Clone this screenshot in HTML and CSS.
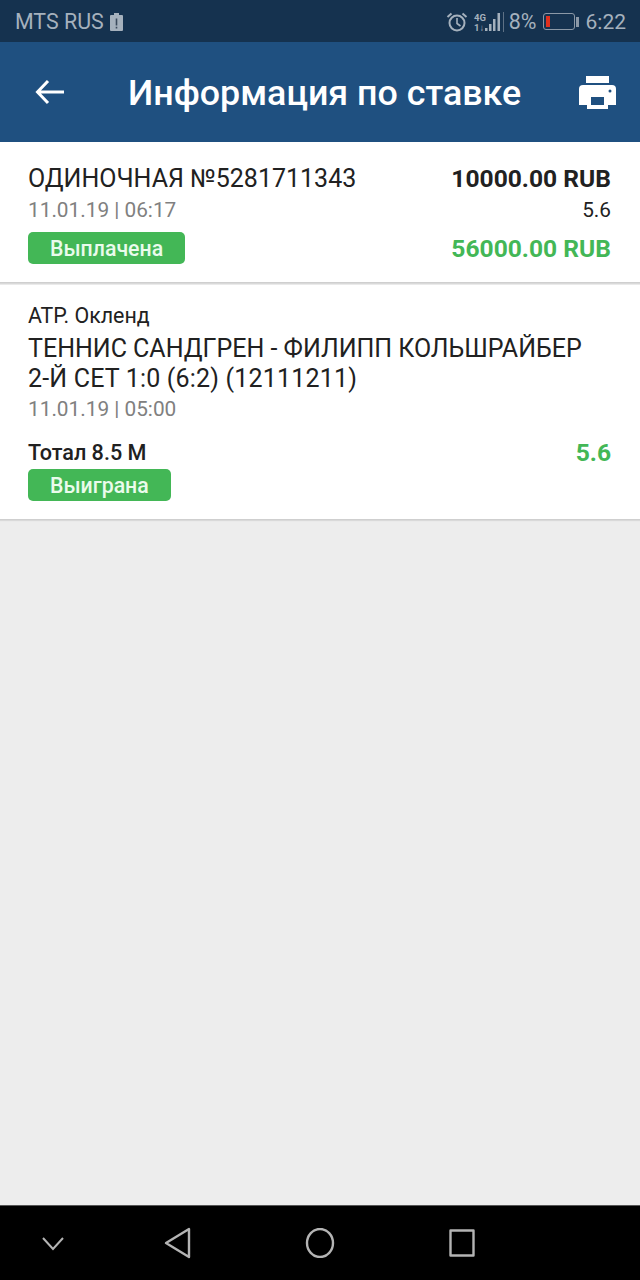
FILE: index.html
```html
<!DOCTYPE html>
<html lang="en">

<head>
    <meta charset="UTF-8">
    <title>Информация по ставке</title>
    <link rel="stylesheet" href="styles.css">
</head>

<body>
    <div class="status">
        <div class="status-left">
            <span>MTS RUS</span>
            <svg width="13" height="20" viewBox="0 0 13 20"><path d="M4 1h5v2h3a1 1 0 0 1 1 1v14a1 1 0 0 1-1 1H1a1 1 0 0 1-1-1V4a1 1 0 0 1 1-1h3z" fill="#a5b1bd"/><path d="M5.700 6.500h1.600v7H5.700zM5.700 14.800h1.600v1.700H5.700z" fill="#3a4a5c"/></svg>
        </div>
        <div class="status-right">
            <svg width="22" height="20" viewBox="0 0 22 20" fill="none" stroke="#a5b1bd"><circle cx="11" cy="11" r="7.500" stroke-width="2"/><path d="M11 6v5.500l3.500 2.500" stroke-width="1.600"/><path d="M1.500 5l4-3.500M20.500 5l-4-3.500" stroke-width="2"/></svg>
            <svg class="signal" width="30" height="22" viewBox="0 0 30 22" fill="#a5b1bd">
                <text class="net" x="1" y="10">4G</text>
                <text class="net" x="1" y="20">1↓</text>
                <rect x="12" y="17" width="2.500" height="3"/>
                <rect x="16" y="13" width="2.500" height="7"/>
                <rect x="20" y="8" width="2.500" height="12"/>
                <rect x="24.500" y="2" width="2.500" height="18"/>
            </svg>
            <span class="divider"></span>
            <span class="pct">8%</span>
            <span class="battery"><span class="battery-level"></span></span>
            <span class="battery-tip"></span>
            <span class="time">6:22</span>
        </div>
    </div>

    <div class="toolbar">
        <svg class="back" width="30" height="26" viewBox="0 0 30 26" fill="none" stroke="#fff" stroke-width="3"><path d="M29 13H3M13 2L2.500 13 13 24"/></svg>
        <h1>Информация по ставке</h1>
        <svg class="print" width="37" height="33" viewBox="0 0 37 33" fill="#fff">
            <rect x="7" y="0" width="23" height="7"/>
            <path d="M4 9h29a4 4 0 0 1 4 4v16H0V13a4 4 0 0 1 4-4z"/>
            <rect x="8" y="20" width="21" height="13"/>
            <rect x="12" y="21" width="13" height="8" fill="#1f5080"/>
            <circle cx="31" cy="15" r="1.500" fill="#1f5080"/>
        </svg>
    </div>

    <div class="card card-bet">
        <div class="row">
            <div class="bet-title">ОДИНОЧНАЯ №5281711343</div>
            <div class="stake">10000.00 RUB</div>
        </div>
        <div class="row row-date">
            <div class="date">11.01.19 | 06:17</div>
            <div class="coef">5.6</div>
        </div>
        <div class="row row-paid">
            <div class="badge badge-paid">Выплачена</div>
            <div class="win">56000.00 RUB</div>
        </div>
    </div>

    <div class="card card-event">
        <div class="league">ATP. Окленд</div>
        <div class="event">ТЕННИС САНДГРЕН - ФИЛИПП КОЛЬШРАЙБЕР<br><span class="event-set">2-Й СЕТ 1:0 (6:2) (12111211)</span></div>
        <div class="date date-event">11.01.19 | 05:00</div>
        <div class="row row-total">
            <div>
                <div class="total">Тотал 8.5 М</div>
                <div class="badge badge-won">Выиграна</div>
            </div>
            <div class="win-coef">5.6</div>
        </div>
    </div>

    <div class="empty"></div>

    <div class="navbar">
        <svg width="24" height="16" viewBox="0 0 24 16" fill="none" stroke="#b4b4b4" stroke-width="2"><path d="M2 3l10 11L22 3"/></svg>
        <svg class="nav-back" width="28" height="32" viewBox="0 0 28 32" fill="none" stroke="#b4b4b4" stroke-width="2.400" stroke-linejoin="round"><path d="M25 2v28L2 16z"/></svg>
        <svg class="nav-home" width="30" height="30" viewBox="0 0 30 30" fill="none" stroke="#b4b4b4" stroke-width="2.400"><ellipse cx="15" cy="15" rx="13" ry="14"/></svg>
        <svg class="nav-home" width="28" height="28" viewBox="0 0 28 28" fill="none" stroke="#b4b4b4" stroke-width="2.400" stroke-linejoin="round"><rect x="2.500" y="1.500" width="23" height="25"/></svg>
    </div>
</body>

</html>
```

FILE: styles.css
```css
html {
    background: #ededed;
}
body {
    margin: 0;
    width: 640px;
    height: 1280px;
    display: flex;
    flex-direction: column;
    font-family: Roboto, sans-serif;
    color: #212121;
    background: #ededed;
}

.status {
    height: 42px;
    background: #15324f;
    color: #a5b1bd;
    display: flex;
    justify-content: space-between;
    align-items: center;
    padding: 1px 14px 0 15px;
    box-sizing: border-box;
    font-size: 21.400px;
}
.status-left {
    display: flex;
    align-items: center;
    gap: 6px;
}
.status-right {
    display: flex;
    align-items: center;
}
.signal {
    margin-left: 5px;
}
.net {
    font-size: 9.500px;
    font-weight: 700;
}
.divider {
    width: 1px;
    height: 20px;
    background: #5e7185;
    margin: 0 5px 0 0;
}
.pct {
    margin-right: 6px;
}
.battery {
    width: 32px;
    height: 17px;
    box-sizing: border-box;
    border: 1px solid #8b98a6;
    border-radius: 3px;
    display: block;
    padding: 2px;
}
.battery-level {
    display: block;
    width: 4px;
    height: 100%;
    background: #e0301e;
}
.battery-tip {
    width: 3px;
    height: 10px;
    background: #8b98a6;
    margin: 0 7px 0 1px;
}
.time {
    font-size: 21px;
}

.toolbar {
    height: 100px;
    box-sizing: border-box;
    background: #1f5080;
    display: flex;
    align-items: center;
    padding: 0 6px 0 35px;
    color: #fff;
}
.back {
    margin-right: 63px;
}
h1 {
    margin: 4px 0 0;
    flex: 1;
    font-size: 35.800px;
    font-weight: 500;
    line-height: 1;
    white-space: nowrap;
}
.print {
    margin-right: 18px;
}

.card {
    background: #fff;
    border-bottom: 1px solid #cfcfcf;
    box-shadow: 0 1px 1px #d9d9d9;
    padding: 0 29px 0 28px;
}
.card-bet {
    height: 141px;
    box-sizing: border-box;
    padding-top: 22px;
    margin-bottom: 2px;
}
.card-event {
    height: 235px;
    box-sizing: border-box;
    padding-top: 19px;
}
.row {
    display: flex;
    justify-content: space-between;
    align-items: center;
}
.bet-title {
    font-size: 25px;
    line-height: 29px;
}
.stake {
    font-size: 24.600px;
    line-height: 29px;
    font-weight: 700;
}
.row-date {
    margin-top: 4px;
}
.date {
    font-size: 20.800px;
    line-height: 26px;
    color: #808080;
}
.coef {
    font-size: 20.800px;
    line-height: 26px;
}
.row-paid {
    margin-top: 9px;
}
.badge {
    height: 32px;
    box-sizing: border-box;
    background: #43b756;
    color: #eafbec;
    border-radius: 5px;
    font-size: 21.300px;
    font-weight: 500;
    line-height: 33px;
    padding-left: 22px;
}
.badge-paid {
    width: 157px;
}
.badge-won {
    width: 143px;
    margin-top: 3px;
}
.win {
    font-size: 24.600px;
    font-weight: 700;
    color: #43b756;
}
.league {
    font-size: 21.400px;
    line-height: 24px;
}
.event {
    font-size: 25px;
    line-height: 30px;
    margin-top: 6px;
}
.event-set {
    letter-spacing: 0.180px;
}
.date-event {
    margin-top: 2px;
}
.row-total {
    margin-top: 17px;
    align-items: flex-start;
}
.total {
    font-size: 21.600px;
    line-height: 27px;
    font-weight: 500;
}
.win-coef {
    font-size: 24.600px;
    line-height: 27px;
    font-weight: 700;
    color: #43b756;
}

.empty {
    flex: 1;
}
.navbar {
    height: 75px;
    background: #000;
    border-top: 1px solid #555;
    box-sizing: border-box;
    display: flex;
    align-items: center;
    padding-left: 41px;
}
.nav-back {
    margin-left: 99px;
}
.nav-home {
    margin-left: 113px;
}
```
